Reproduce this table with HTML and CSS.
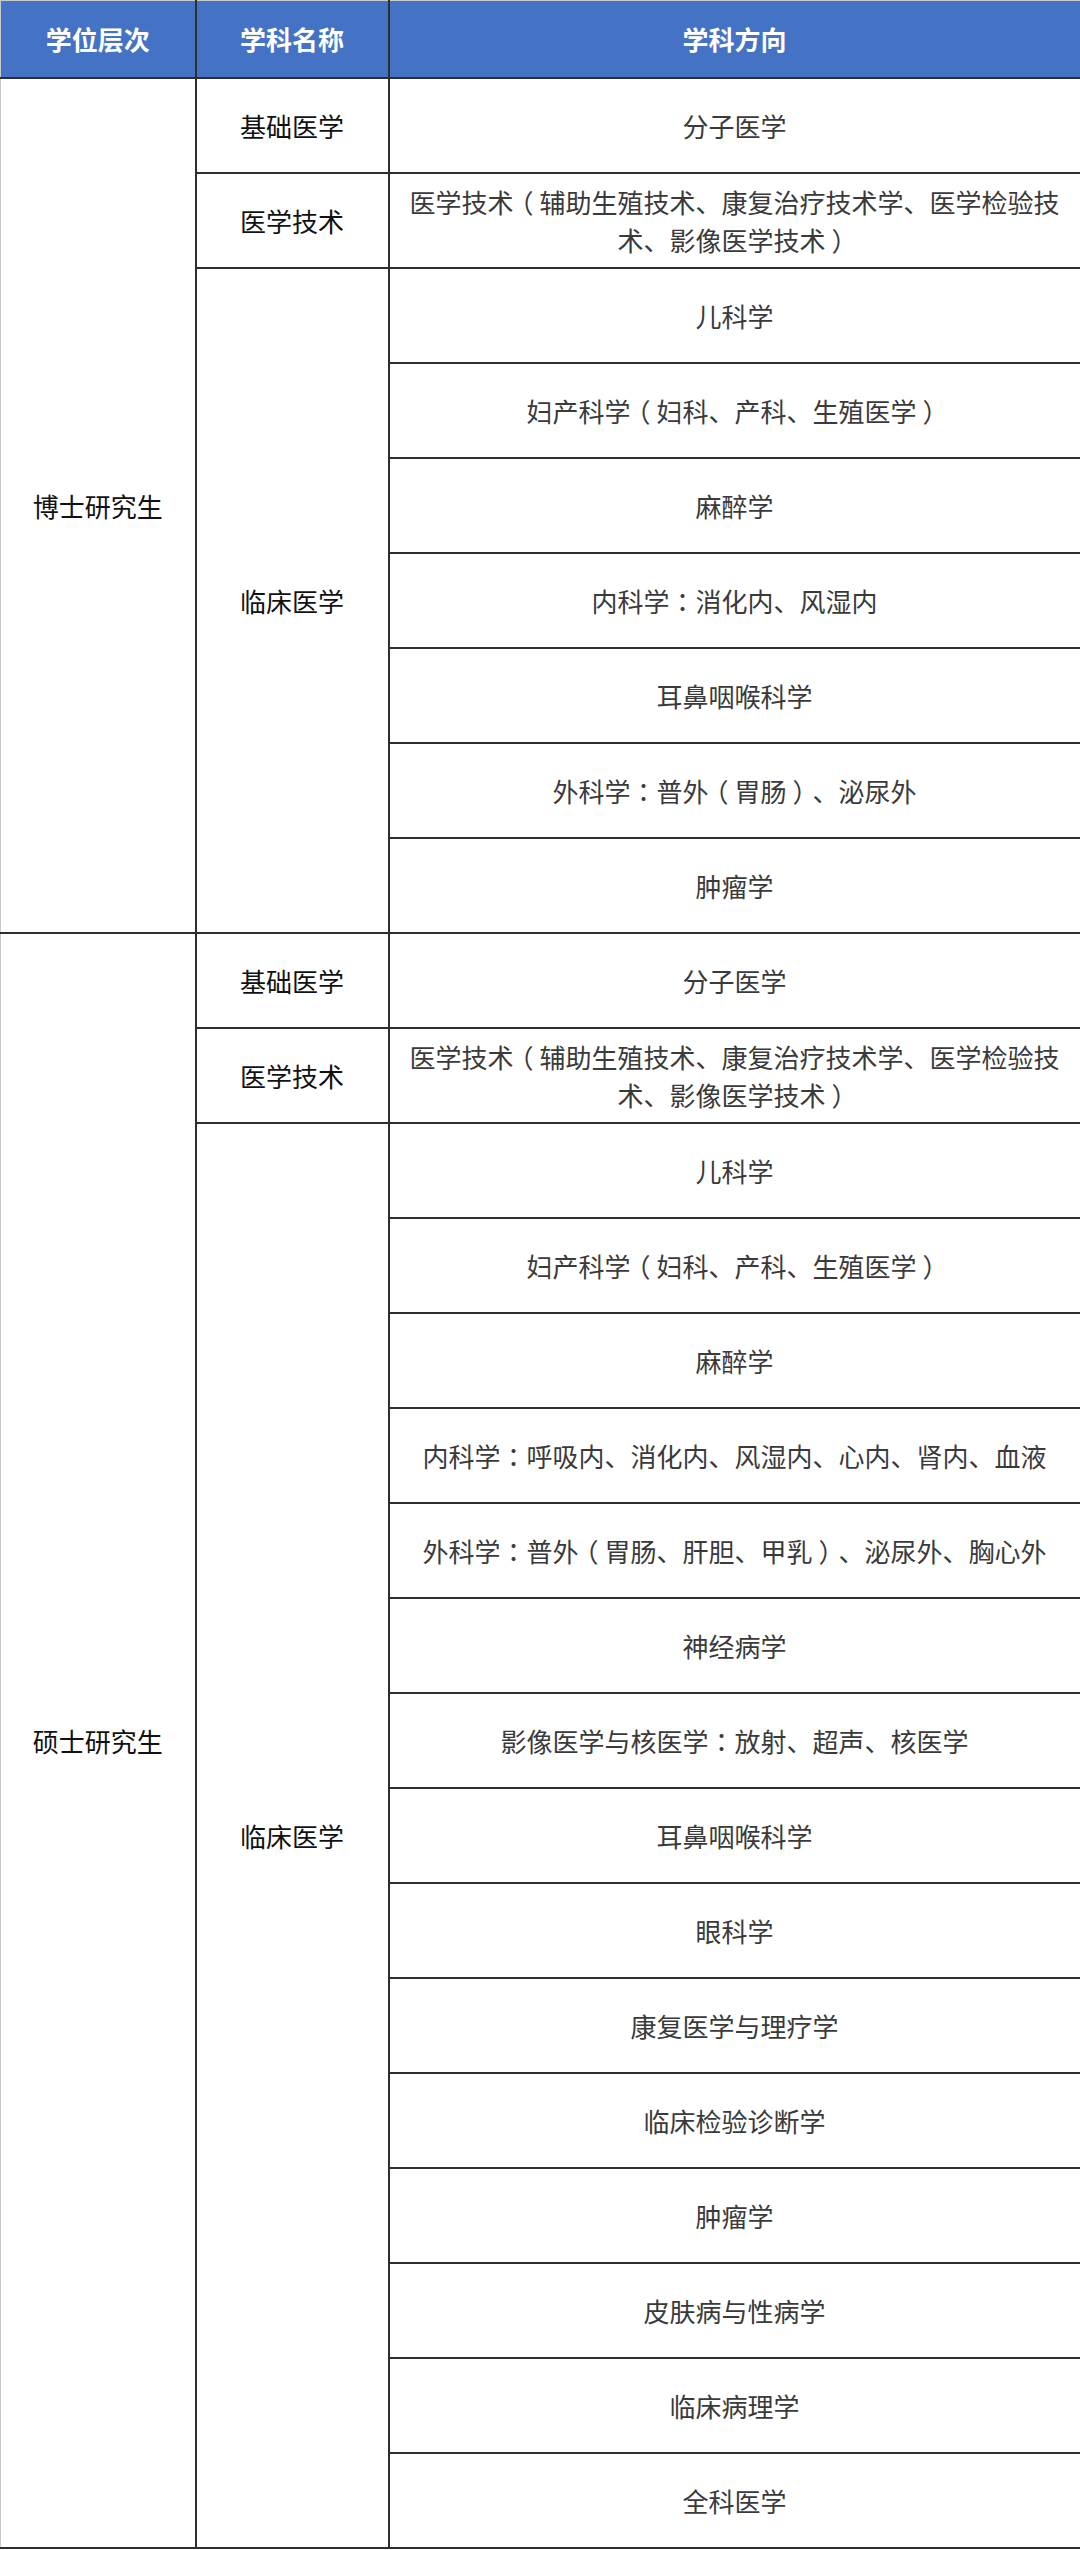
FILE: index.html
```html
<!DOCTYPE html>
<html lang="zh-CN">
<head>
<meta charset="utf-8">
<title>学位层次与学科方向</title>
<link rel="stylesheet" href="styles.css">
</head>
<body>
<table class="subjects">
  <colgroup>
    <col class="c-level">
    <col class="c-name">
    <col class="c-dir">
  </colgroup>
  <thead>
    <tr class="head-row">
      <th class="h-first">学位层次</th>
      <th>学科名称</th>
      <th>学科方向</th>
    </tr>
  </thead>
  <tbody>
    <tr>
      <td class="level" rowspan="9">博士研究生</td>
      <td class="name">基础医学</td>
      <td class="dir">分子医学</td>
    </tr>
    <tr>
      <td class="name">医学技术</td>
      <td class="dir">医学技术<span class="op">（</span>辅助生殖技术、康复治疗技术学、医学检验技<br>术、影像医学技术<span class="cp">）</span></td>
    </tr>
    <tr>
      <td class="name" rowspan="7">临床医学</td>
      <td class="dir">儿科学</td>
    </tr>
    <tr><td class="dir">妇产科学<span class="op">（</span>妇科、产科、生殖医学<span class="cp">）</span></td></tr>
    <tr><td class="dir">麻醉学</td></tr>
    <tr><td class="dir">内科学<span class="co" lang="zh-TW">：</span>消化内、风湿内</td></tr>
    <tr><td class="dir">耳鼻咽喉科学</td></tr>
    <tr><td class="dir">外科学<span class="co" lang="zh-TW">：</span>普外<span class="op">（</span>胃肠<span class="cp">）</span>、泌尿外</td></tr>
    <tr><td class="dir">肿瘤学</td></tr>

    <tr>
      <td class="level" rowspan="17">硕士研究生</td>
      <td class="name">基础医学</td>
      <td class="dir">分子医学</td>
    </tr>
    <tr>
      <td class="name">医学技术</td>
      <td class="dir">医学技术<span class="op">（</span>辅助生殖技术、康复治疗技术学、医学检验技<br>术、影像医学技术<span class="cp">）</span></td>
    </tr>
    <tr>
      <td class="name" rowspan="15">临床医学</td>
      <td class="dir">儿科学</td>
    </tr>
    <tr><td class="dir">妇产科学<span class="op">（</span>妇科、产科、生殖医学<span class="cp">）</span></td></tr>
    <tr><td class="dir">麻醉学</td></tr>
    <tr><td class="dir">内科学<span class="co" lang="zh-TW">：</span>呼吸内、消化内、风湿内、心内、肾内、血液</td></tr>
    <tr><td class="dir">外科学<span class="co" lang="zh-TW">：</span>普外<span class="op">（</span>胃肠、肝胆、甲乳<span class="cp">）</span>、泌尿外、胸心外</td></tr>
    <tr><td class="dir">神经病学</td></tr>
    <tr><td class="dir">影像医学与核医学<span class="co" lang="zh-TW">：</span>放射、超声、核医学</td></tr>
    <tr><td class="dir">耳鼻咽喉科学</td></tr>
    <tr><td class="dir">眼科学</td></tr>
    <tr><td class="dir">康复医学与理疗学</td></tr>
    <tr><td class="dir">临床检验诊断学</td></tr>
    <tr><td class="dir">肿瘤学</td></tr>
    <tr><td class="dir">皮肤病与性病学</td></tr>
    <tr><td class="dir">临床病理学</td></tr>
    <tr><td class="dir">全科医学</td></tr>
  </tbody>
</table>
</body>
</html>
```

FILE: styles.css
```css
html, body {
  margin: 0;
  padding: 0;
  background: #ffffff;
}

body {
  font-family: "Noto Sans CJK SC", "Noto Sans", sans-serif;
  font-size: 26px;
}

.subjects {
  width: 1080px;
  border-collapse: collapse;
  table-layout: fixed;
  border-top: 1px solid #c9c9c9;
  border-left: 1px solid #c9c9c9;
}

.c-level { width: 195px; }
.c-name { width: 193px; }
.c-dir { width: 692px; }

.subjects th,
.subjects td {
  border: 2px solid #2e2e2e;
  text-align: center;
  vertical-align: middle;
  padding: 0 15px;
  line-height: 38px;
  font-weight: 400;
  text-spacing-trim: space-all;
}

.head-row th {
  height: 76px;
  background: #4472c4;
  color: #ffffff;
  font-weight: 700;
  border-top: 1px solid #c9c9c9;
}

.head-row th.h-first {
  border-left: 1px solid #c9c9c9;
}

.subjects td {
  height: 93px;
  color: #111111;
}

.subjects td.level {
  border-left: 1px solid #c9c9c9;
}

.subjects td.dir {
  color: #3a3a3a;
}

/* full-width punctuation drawn centred in its em box */
.co {
  font-family: "Noto Sans CJK TC", "Noto Sans CJK SC", sans-serif;
}

.op,
.cp {
  font-feature-settings: "halt" 1;
}

.op {
  margin-left: 0.27em;
  margin-right: 0.23em;
}

.cp {
  margin-left: 0.23em;
  margin-right: 0.27em;
}
```
